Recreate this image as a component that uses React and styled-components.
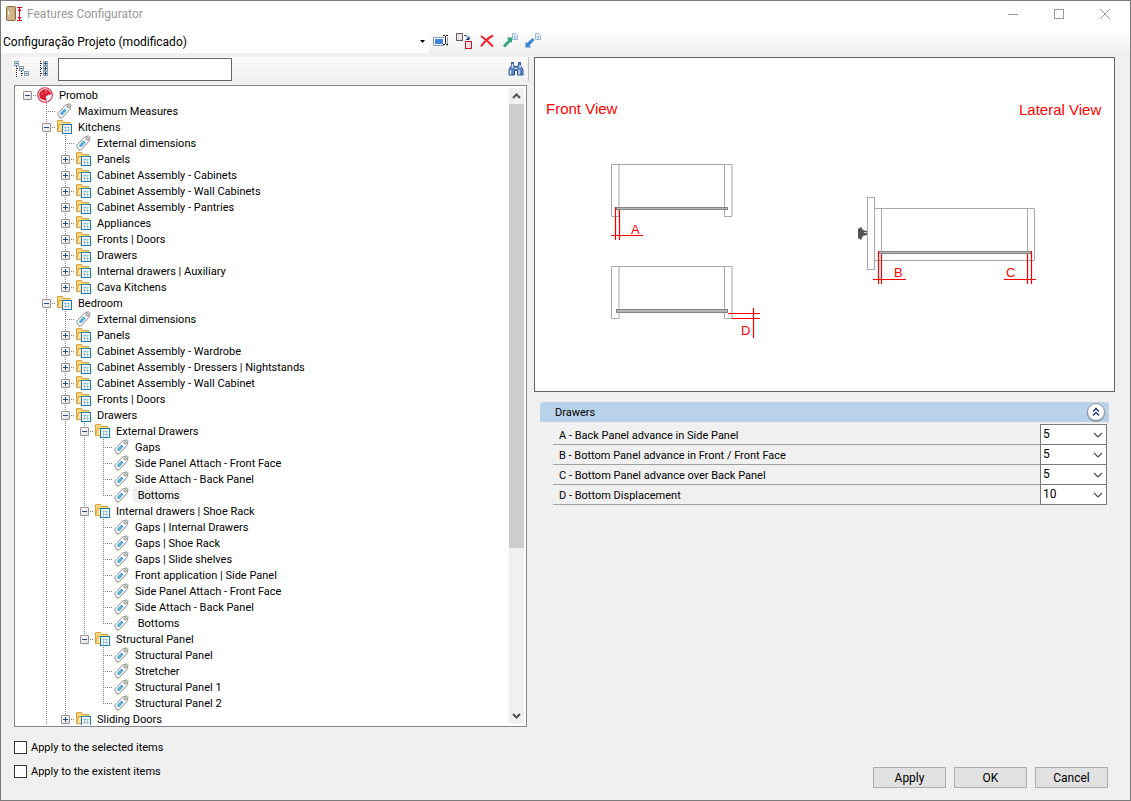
import { useState } from "react";
import styled, { createGlobalStyle } from "styled-components";

const GlobalStyle = createGlobalStyle`
  *, *::before, *::after {
    box-sizing: border-box;
  }

  body {
    margin: 0;
    background: #f0f0f0;
    color: #000;
    font-family: Roboto, "Liberation Sans", Arial, sans-serif;
    font-size: 11px;
  }

  button, input, select {
    font: inherit;
    color: inherit;
    margin: 0;
  }

  svg {
    display: block;
    flex: none;
  }
`;

const Window = styled.div`
  display: flex;
  flex-direction: column;
  height: 100vh;
  border: 1px solid #7a7a7a;
  background: #f0f0f0;
`;

const TitleBar = styled.header`
  display: flex;
  align-items: center;
  flex: none;
  height: 27px;
  padding: 0 2px 2px 5px;
  background: #fff;
`;

const Title = styled.h1`
  flex: 1;
  margin: 0 0 0 4px;
  font-size: 12px;
  font-weight: 400;
  color: #999;
`;

const CaptionButton = styled.button`
  display: grid;
  place-items: center;
  width: 46px;
  height: 24px;
  padding: 0;
  border: 0;
  background: none;
  color: #999;
`;

const ProjectBar = styled.div`
  display: flex;
  flex: none;
  height: 25px;
  background: linear-gradient(#fff, #f1f1f1);
`;

const ProjectField = styled.div`
  position: relative;
  width: 428px;
  height: 25px;
  background: #fff;
`;

const ProjectSelect = styled.select`
  appearance: none;
  width: 100%;
  height: 25px;
  padding: 2px 20px 0 2px;
  border: 0;
  background: transparent;
  font-size: 12px;
`;

const ProjectArrow = styled.svg`
  position: absolute;
  right: 4px;
  top: 12px;
  pointer-events: none;
`;

const Tools = styled.div`
  display: flex;
  align-items: center;
  gap: 7px;
  padding-left: 4px;
`;

const IconButton = styled.button`
  display: grid;
  place-items: center;
  width: 16px;
  height: 16px;
  padding: 0;
  border: 0;
  background: none;
`;

const Content = styled.main`
  display: grid;
  grid-template-columns: minmax(0, 517fr) minmax(0, 581fr);
  gap: 5px;
  flex: 1;
  min-height: 0;
  padding: 4px 15px 0 11px;
`;

const Column = styled.section`
  display: flex;
  flex-direction: column;
  min-height: 0;
`;

const TreeTools = styled.div`
  display: flex;
  align-items: center;
  gap: 6px;
  flex: none;
  height: 24px;
  margin-bottom: 4px;
  padding: 0 4px 0 2px;
  border-right: 1px solid #c4c4c4;
  background: linear-gradient(#fafafa, #f0f0f0);
`;

const SearchInput = styled.input`
  width: 174px;
  height: 23px;
  margin-right: auto;
  padding: 0 4px;
  border: 1px solid #646464;
  background: #fff;
`;

const TreeBox = styled.div`
  display: flex;
  flex: 1;
  min-height: 0;
  margin: 0 2px;
  padding: 1px 2px 1px 3px;
  border: 1px solid #828790;
  background: #fff;
  overflow: hidden;
`;

const TreeList = styled.ul`
  flex: 1;
  min-width: 0;
  margin: 0;
  padding: 0;
  list-style: none;
  overflow: hidden;
`;

const TreeRow = styled.li`
  display: flex;
  height: 16px;
`;

const dotsDown = "repeating-linear-gradient(#808080 0 1px, transparent 1px 2px)";
const dotsRight =
  "repeating-linear-gradient(90deg, #808080 0 1px, transparent 1px 2px)";

const Guide = styled.span`
  display: grid;
  place-items: center;
  flex: none;
  width: 19px;
  height: 16px;
  background-repeat: no-repeat;
  background-image: ${({ $line }) => ($line ? dotsDown : "none")},
    ${({ $branch }) => ($branch ? dotsRight : "none")};
  background-size:
    1px ${({ $line }) => ($line === "half" ? "8px" : "16px")},
    10px 1px;
  background-position:
    9px 0,
    9px 8px;
`;

const Expander = styled.button`
  display: grid;
  place-items: center;
  width: 9px;
  height: 9px;
  padding: 0;
  border: 1px solid #919191;
  border-radius: 1px;
  background: linear-gradient(135deg, #fff, #e0e0e0);
`;

const NodeIcon = styled.span`
  display: block;
  flex: none;
  width: 20px;
`;

const NodeLabel = styled.span`
  height: 16px;
  padding: 0 2px;
  line-height: 18px;
  white-space: pre;
  background: ${({ $selected }) => ($selected ? "#f0f0f0" : "transparent")};
`;

const ScrollBar = styled.div`
  display: flex;
  flex-direction: column;
  flex: none;
  width: 15px;
  margin: 1px 0;
  background: #f0f0f0;
`;

const ScrollButton = styled.button`
  display: grid;
  place-items: center;
  flex: none;
  width: 15px;
  height: 16px;
  padding: 0;
  border: 0;
  background: #f0f0f0;
`;

const ScrollTrack = styled.div`
  flex: 1;
`;

const ScrollThumb = styled.div`
  height: 73.5%;
  background: #cdcdcd;
`;

const Preview = styled.figure`
  margin: 0;
  border: 1px solid #646464;
  background: #fff;

  svg {
    width: 100%;
    height: auto;
  }
`;

const Group = styled.fieldset`
  margin: 10px 6px 0;
  padding: 0;
  border: 0;
  min-width: 0;
`;

const GroupHeader = styled.div`
  display: flex;
  align-items: center;
  justify-content: space-between;
  height: 20px;
  padding: 0 4px 0 15px;
  border-radius: 4px 4px 0 0;
  background: #bad1ea;
`;

const CollapseButton = styled.button`
  display: grid;
  place-items: center;
  width: 18px;
  height: 18px;
  padding: 0;
  border: 1px solid #8b93a5;
  border-radius: 50%;
  background: #fff;
  box-shadow: 0 1px 1px #8b93a5;
`;

const Fields = styled.div`
  margin: 3px 2px 0 13px;
`;

const FieldRow = styled.div`
  display: flex;
  height: 20px;
  border-bottom: 1px solid #a0a0a0;
`;

const FieldLabel = styled.label`
  flex: 1;
  padding-left: 6px;
  line-height: 22px;
`;

const FieldControl = styled.div`
  position: relative;
  width: 67px;
  height: 21px;
  margin-top: -1px;

  svg {
    position: absolute;
    right: 4px;
    top: 8px;
    pointer-events: none;
  }
`;

const FieldSelect = styled.select`
  appearance: none;
  display: block;
  width: 100%;
  height: 21px;
  padding: 0 16px 1px 2px;
  border: 1px solid #7a7a7a;
  border-radius: 0;
  background: #fff;
  font-size: 12px;
`;

const Footer = styled.footer`
  display: flex;
  align-items: flex-end;
  justify-content: space-between;
  flex: none;
  height: 73px;
  padding: 0 22px 12px 13px;
`;

const Options = styled.div`
  display: flex;
  flex-direction: column;
  align-self: flex-start;
  gap: 8px;
  padding-top: 12px;
`;

const Option = styled.label`
  display: flex;
  align-items: center;
  gap: 4px;
  height: 16px;
`;

const CheckBox = styled.input`
  appearance: none;
  width: 13px;
  height: 13px;
  border: 1px solid #333;
  background: #fff;
`;

const Actions = styled.div`
  display: flex;
  gap: 8px;
`;

const ActionButton = styled.button`
  width: 73px;
  height: 21px;
  padding: 0;
  border: 1px solid #adadad;
  background: #e1e1e1;
  font-size: 12px;
`;

// [depth, type, label, expanded]
const nodes = [
  [0, "root", "Promob", true],
  [1, "tag", "Maximum Measures"],
  [1, "folder", "Kitchens", true],
  [2, "tag", "External dimensions"],
  [2, "folder", "Panels"],
  [2, "folder", "Cabinet Assembly - Cabinets"],
  [2, "folder", "Cabinet Assembly - Wall Cabinets"],
  [2, "folder", "Cabinet Assembly - Pantries"],
  [2, "folder", "Appliances"],
  [2, "folder", "Fronts | Doors"],
  [2, "folder", "Drawers"],
  [2, "folder", "Internal drawers | Auxiliary"],
  [2, "folder", "Cava Kitchens"],
  [1, "folder", "Bedroom", true],
  [2, "tag", "External dimensions"],
  [2, "folder", "Panels"],
  [2, "folder", "Cabinet Assembly - Wardrobe"],
  [2, "folder", "Cabinet Assembly - Dressers | Nightstands"],
  [2, "folder", "Cabinet Assembly - Wall Cabinet"],
  [2, "folder", "Fronts | Doors"],
  [2, "folder", "Drawers", true],
  [3, "folder", "External Drawers", true],
  [4, "tag", "Gaps"],
  [4, "tag", "Side Panel Attach - Front Face"],
  [4, "tag", "Side Attach - Back Panel"],
  [4, "tag", " Bottoms"],
  [3, "folder", "Internal drawers | Shoe Rack", true],
  [4, "tag", "Gaps | Internal Drawers"],
  [4, "tag", "Gaps | Shoe Rack"],
  [4, "tag", "Gaps | Slide shelves"],
  [4, "tag", "Front application | Side Panel"],
  [4, "tag", "Side Panel Attach - Front Face"],
  [4, "tag", "Side Attach - Back Panel"],
  [4, "tag", " Bottoms"],
  [3, "folder", "Structural Panel", true],
  [4, "tag", "Structural Panel"],
  [4, "tag", "Stretcher"],
  [4, "tag", "Structural Panel 1"],
  [4, "tag", "Structural Panel 2"],
  [2, "folder", "Sliding Doors"],
];

const fields = [
  { id: "a", label: "A - Back Panel advance in Side Panel", value: "5" },
  { id: "b", label: "B - Bottom Panel advance in Front / Front Face", value: "5" },
  { id: "c", label: "C - Bottom Panel advance over Back Panel", value: "5" },
  { id: "d", label: "D - Bottom Displacement", value: "10" },
];

// The branches at depth 1 and 2 go on below the visible part of the list
function hasNextSibling(index, depth) {
  if (depth === 0) return false;
  const next = nodes.slice(index + 1).find((node) => node[0] <= depth);
  return next ? next[0] === depth : depth <= 2;
}

function AppIcon() {
  return (
    <svg width="17" height="16" viewBox="0 0 17 16">
      <rect x="0.5" y="0.5" width="9" height="14" rx="1" fill="#c6a674" stroke="#8c6d42" />
      <path d="M1.5 1.5h6v12h-6z" fill="#d3b88b" />
      <path d="M2.5 5v4" stroke="#fff" />
      <path d="M11 1.5h5M11 14.5h5M13.5 2v12" stroke="#e2001a" />
      <path d="M11.5 5l2-3 2 3zM11.5 11l2 3 2-3z" fill="#e2001a" />
    </svg>
  );
}

function RootIcon() {
  return (
    <svg width="16" height="16" viewBox="0 0 16 16">
      <circle cx="8" cy="8" r="7.3" fill="#fff" stroke="#d5263a" strokeWidth="1.1" />
      <path d="M8.5 2.2C5 2 2.2 4.5 2.2 8c0 1.5.5 2.8 1.3 3.8L5 12.5l2 .5 2 1c1-.3.5-2.300 0-3.300l0-1.700 2-.5 1-1 1.500.5.5-2C12.500 3.500 10.500 2.300 8.500 2.200z" fill="#dc1f35" />
      <path d="M9 3v3M6 5.5l-1 2" fill="none" stroke="#f1969f" />
    </svg>
  );
}

function TagIcon() {
  return (
    <svg width="16" height="16" viewBox="0 0 16 16">
      <path d="M1.5 10.5L9.5 2l4-1.2L15 2.300l-1 4L6.500 14.500l-2.500.5z" fill="#f4f4f4" stroke="#8f8f8f" />
      <circle cx="12.3" cy="3.6" r="1.2" fill="#fff" stroke="#808080" />
      <path d="M4 10.500L8.500 5.700l2 1.800L6 12.300z" fill="#2b93cf" />
      <path d="M5 11.500L9.500 6.800" stroke="#8fd0ee" />
    </svg>
  );
}

function FolderIcon() {
  return (
    <svg width="17" height="16" viewBox="0 0 17 16">
      <path d="M1.5 12.5v-11h5l1 2h6.5v9z" fill="#fbd97c" stroke="#d9a040" />
      <path d="M1.5 12.5l2-7h11l-1.5 7z" fill="#fde39a" stroke="#d9a040" />
      <rect x="6.5" y="5.5" width="9" height="9" fill="#fff" stroke="#1979b5" />
      <path d="M8 8.5h6M8 11.5h6M9.500 7.500v6M12.500 7.500v6" stroke="#9cc3dd" />
    </svg>
  );
}

const nodeIcons = { root: RootIcon, tag: TagIcon, folder: FolderIcon };

function Chevron() {
  return (
    <svg width="10" height="6" viewBox="0 0 10 6">
      <path d="M1 1l4 4 4-4" fill="none" stroke="#505050" strokeWidth="1.2" />
    </svg>
  );
}

function ScrollArrow({ up }) {
  return (
    <svg width="9" height="6" viewBox="0 0 9 6">
      <path d={up ? "M1 5l3.5-3.5L8 5" : "M1 1l3.5 3.5L8 1"} fill="none" stroke="#505050" strokeWidth="2" />
    </svg>
  );
}

function RenameIcon() {
  return (
    <svg width="16" height="16" viewBox="0 0 16 16">
      <path d="M11 4.5H0.5v8H11M14 4.5h0.5v8H14" fill="#fff" stroke="#8a9bb5" />
      <rect x="2" y="6" width="8" height="5" fill="#3d86e0" />
      <path d="M10 2.5h2M13 2.5h2M12.5 3v8M10 11.5h2M13 11.5h2" stroke="#222" />
    </svg>
  );
}

function ReplaceIcon() {
  return (
    <svg width="16" height="16" viewBox="0 0 16 16">
      <rect x="0.5" y="0.5" width="6" height="7" fill="#e9e4e8" stroke="#6b6067" />
      <rect x="9.5" y="8.5" width="6" height="7" fill="#f5dfe0" stroke="#d3141d" />
      <path d="M8 2.5h2l2 2" fill="none" stroke="#123c86" />
      <path d="M13.5 3v4h-4z" fill="#123c86" />
    </svg>
  );
}

function DeleteIcon() {
  return (
    <svg width="16" height="16" viewBox="0 0 16 16">
      <path d="M2 3c3 2 8 6 12 10.5M14 2.5C9 5 5 9 2 13.5" fill="none" stroke="#f0222b" strokeWidth="2" />
    </svg>
  );
}

function ArrowPageIcon({ color, down }) {
  return (
    <svg width="16" height="16" viewBox="0 0 16 16">
      <path d="M10.5 0.5h3l2 2v4h-5z" fill="#e3eefb" stroke="#9bb6dc" />
      <path d="M12 3.5h2M12 5h2" stroke="#9bb6dc" />
      {down ? (
        <path d="M0.5 14.5V9l1.5 1L7.5 5l2 2-5 5.5 1.5 2z" fill={color} />
      ) : (
        <path d="M10 4.5v5.5l-1.5-1.2L3 14.5l-2-2L6.200 7 5 4.500z" fill={color} />
      )}
    </svg>
  );
}

function CollapseTreeIcon() {
  return (
    <svg width="16" height="16" viewBox="0 0 16 16">
      <path d="M2.5 5v11M7.5 10v6" stroke="#222" strokeDasharray="1 1" />
      <path d="M3 7.5h3M8 12.5h3" stroke="#222" strokeDasharray="1 1" />
      <g fill="#e8edf2" stroke="#8ba2b6">
        <rect x="0.5" y="0.5" width="4" height="4" />
        <rect x="5.5" y="5.5" width="4" height="4" />
        <rect x="10.5" y="10.5" width="4" height="4" />
      </g>
      <path d="M1.5 2.5h2M6.5 7.5h2M11.5 12.5h2" stroke="#274d70" />
    </svg>
  );
}

function ExpandTreeIcon() {
  return (
    <svg width="16" height="16" viewBox="0 0 16 16">
      <path d="M4.5 0v16" stroke="#222" strokeDasharray="1 1" />
      <path d="M5 2.5h3M5 7.5h3M5 12.5h3" stroke="#222" strokeDasharray="1 1" />
      <g fill="#e8edf2" stroke="#8ba2b6">
        <rect x="7.5" y="0.5" width="4" height="4" />
        <rect x="7.5" y="5.5" width="4" height="4" />
        <rect x="7.5" y="10.5" width="4" height="4" />
      </g>
      <path d="M8 2.5h3M8 7.5h3M8 12.5h3M9.5 1v3M9.5 6v3M9.5 11v3" stroke="#274d70" />
    </svg>
  );
}

function BinocularsIcon() {
  return (
    <svg width="16" height="16" viewBox="0 0 16 16">
      <path d="M3.5 1.5h2v3l1.5 1h2l1.5-1v-3h2v3l2.5 4V14H9.5V9.500h-3V14H1V8.500l2.500-4z" fill="#5b86c2" stroke="#234a86" strokeWidth="0.9" />
      <path d="M2.5 9v4.500M11 9v4.500M4.500 3v4M12 4v3" stroke="#d3e3f7" strokeWidth="1.4" />
      <path d="M7 7.5h2" stroke="#dce9f8" />
    </svg>
  );
}

function Drawing() {
  return (
    <svg viewBox="535 58 579 333" role="img" aria-label="Drawer views">
      <g fill="none" stroke="#a8a8a8">
        <path d="M611.5 216.5v-52h120.5v52h-7.5v-52M611.5 216.5h7.5v-52" />
        <path d="M611.5 318.5v-52h120.5v52h-7.5v-52M611.5 318.5h7.5v-52" />
        <rect x="867.5" y="197.5" width="7" height="72" />
        <path d="M874.5 208.5h160v52h-160M881.5 208.5v43M1027.5 208.5v43" />
      </g>
      <g fill="#b5b5b5" stroke="#858585">
        <rect x="616.5" y="207.5" width="111" height="2" />
        <rect x="616.5" y="309.5" width="111" height="3" />
        <rect x="878.5" y="251.5" width="152" height="2" />
      </g>
      <path d="M858 229l3-2 2 3 4 1v4l-4 1-2 4-3-2z" fill="#555" />
      <path d="M864 232.5h3" stroke="#ccc" />
      <g stroke="#ff0000" strokeWidth="1.2" fill="none">
        <path d="M615.5 207v33M619.5 210v30M611 235.5h32" />
        <path d="M728 313.5h32M732 318.5h28M753.5 308v30" />
        <path d="M878.5 251v33M881.5 254v30M873 279.5h33" />
        <path d="M1027.5 254v30M1031.5 251v33M1004 279.5h32" />
      </g>
      <g fill="#ff0000" fontFamily="Liberation Sans, Arial, sans-serif">
        <g fontSize="15">
          <text x="546" y="114">Front View</text>
          <text x="1019" y="115">Lateral View</text>
        </g>
        <g fontSize="13">
          <text x="631" y="234">A</text>
          <text x="741" y="335">D</text>
          <text x="894" y="277">B</text>
          <text x="1006" y="277">C</text>
        </g>
      </g>
    </svg>
  );
}

function TreeNode({ node, index, selected, onSelect }) {
  const [depth, type, label, expanded] = node;
  const Icon = nodeIcons[type];
  const next = hasNextSibling(index, depth);

  return (
    <TreeRow onClick={() => onSelect(index)}>
      {Array.from({ length: depth }, (_, level) => (
        <Guide key={level} $line={hasNextSibling(index, level) ? "full" : ""} />
      ))}
      <Guide $line={depth === 0 ? "" : next ? "full" : "half"} $branch>
        {type !== "tag" && (
          <Expander aria-label={expanded ? "Collapse" : "Expand"}>
            <svg width="7" height="7" viewBox="0 0 7 7">
              <path d={expanded ? "M1 3.5h5" : "M1 3.5h5M3.5 1v5"} stroke="#2f4a8c" />
            </svg>
          </Expander>
        )}
      </Guide>
      <NodeIcon>
        <Icon />
      </NodeIcon>
      <NodeLabel $selected={selected}>{label}</NodeLabel>
    </TreeRow>
  );
}

function App() {
  const [selected, setSelected] = useState(25);
  const [search, setSearch] = useState("");

  return (
    <Window>
      <GlobalStyle />
      <TitleBar>
        <AppIcon />
        <Title>Features Configurator</Title>
        <CaptionButton aria-label="Minimize">
          <svg width="10" height="10" viewBox="0 0 10 10">
            <path d="M0 5.5h10" stroke="currentColor" />
          </svg>
        </CaptionButton>
        <CaptionButton aria-label="Maximize">
          <svg width="10" height="10" viewBox="0 0 10 10">
            <rect x="0.5" y="0.5" width="9" height="9" fill="none" stroke="currentColor" />
          </svg>
        </CaptionButton>
        <CaptionButton aria-label="Close">
          <svg width="10" height="10" viewBox="0 0 10 10">
            <path d="M0 0l10 10M10 0L0 10" stroke="currentColor" />
          </svg>
        </CaptionButton>
      </TitleBar>

      <ProjectBar>
        <ProjectField>
          <ProjectSelect aria-label="Project configuration">
            <option>Configuração Projeto (modificado)</option>
          </ProjectSelect>
          <ProjectArrow width="5" height="3" viewBox="0 0 5 3">
            <path d="M0 0h5L2.5 3z" />
          </ProjectArrow>
        </ProjectField>
        <Tools>
          <IconButton aria-label="Rename"><RenameIcon /></IconButton>
          <IconButton aria-label="Replace"><ReplaceIcon /></IconButton>
          <IconButton aria-label="Delete"><DeleteIcon /></IconButton>
          <IconButton aria-label="Export"><ArrowPageIcon color="#2fa57a" /></IconButton>
          <IconButton aria-label="Import"><ArrowPageIcon color="#3f85cf" down /></IconButton>
        </Tools>
      </ProjectBar>

      <Content>
        <Column>
          <TreeTools>
            <IconButton aria-label="Collapse all"><CollapseTreeIcon /></IconButton>
            <IconButton aria-label="Expand all"><ExpandTreeIcon /></IconButton>
            <SearchInput
              aria-label="Search"
              value={search}
              onChange={(e) => setSearch(e.target.value)}
            />
            <IconButton aria-label="Find"><BinocularsIcon /></IconButton>
          </TreeTools>
          <TreeBox>
            <TreeList>
              {nodes.map((node, index) => (
                <TreeNode
                  key={index}
                  node={node}
                  index={index}
                  selected={selected === index}
                  onSelect={setSelected}
                />
              ))}
            </TreeList>
            <ScrollBar>
              <ScrollButton aria-label="Scroll up"><ScrollArrow up /></ScrollButton>
              <ScrollTrack>
                <ScrollThumb />
              </ScrollTrack>
              <ScrollButton aria-label="Scroll down"><ScrollArrow /></ScrollButton>
            </ScrollBar>
          </TreeBox>
        </Column>

        <Column>
          <Preview>
            <Drawing />
          </Preview>
          <Group aria-label="Drawers">
            <GroupHeader>
              <span>Drawers</span>
              <CollapseButton aria-label="Collapse group">
                <svg width="8" height="10" viewBox="0 0 8 10">
                  <path d="M1 4.5l3-3 3 3M1 8.5l3-3 3 3" fill="none" stroke="#1d2f66" strokeWidth="1.4" />
                </svg>
              </CollapseButton>
            </GroupHeader>
            <Fields>
              {fields.map(({ id, label, value }) => (
                <FieldRow key={id}>
                  <FieldLabel htmlFor={id}>{label}</FieldLabel>
                  <FieldControl>
                    <FieldSelect id={id} defaultValue={value}>
                      <option>5</option>
                      <option>10</option>
                    </FieldSelect>
                    <Chevron />
                  </FieldControl>
                </FieldRow>
              ))}
            </Fields>
          </Group>
        </Column>
      </Content>

      <Footer>
        <Options>
          <Option>
            <CheckBox type="checkbox" />
            Apply to the selected items
          </Option>
          <Option>
            <CheckBox type="checkbox" />
            Apply to the existent items
          </Option>
        </Options>
        <Actions>
          <ActionButton>Apply</ActionButton>
          <ActionButton>OK</ActionButton>
          <ActionButton>Cancel</ActionButton>
        </Actions>
      </Footer>
    </Window>
  );
}

export default App;
